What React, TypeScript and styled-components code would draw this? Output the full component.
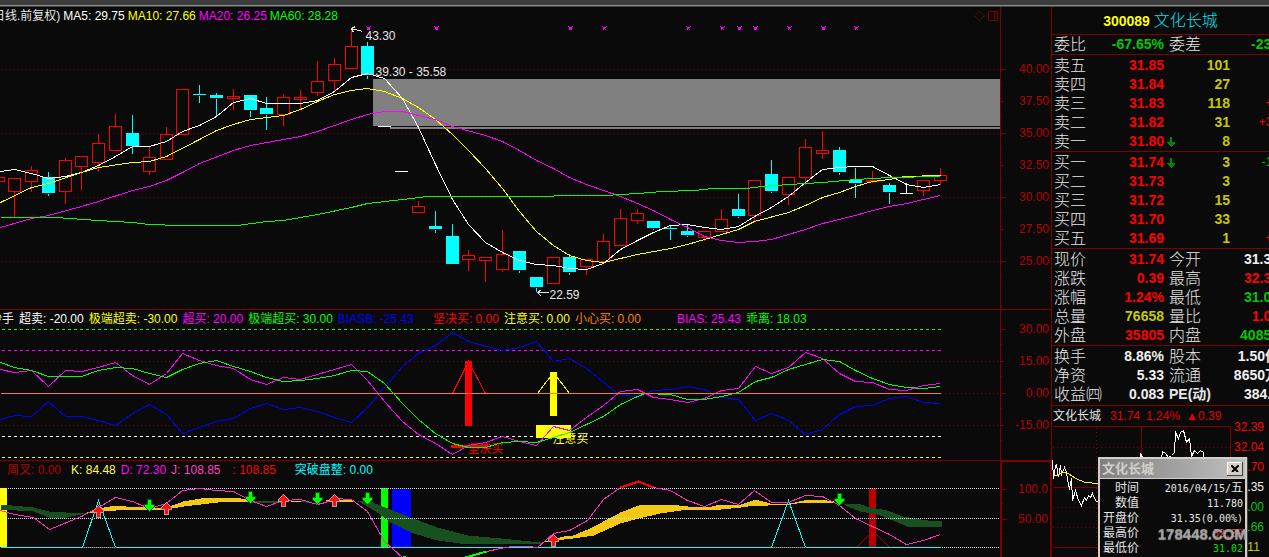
import React from "react";
import styled, { createGlobalStyle } from "styled-components";

const ink = "#0a0a0a";
const line = "#800000";
const sans = `"Liberation Sans", "Noto Sans CJK SC", sans-serif`;

const GlobalStyle = createGlobalStyle`
  * { box-sizing: border-box; }
  body { margin: 0; background: ${ink}; font: 12px/16px ${sans}; color: #e6e6e6; overflow: hidden; }
  button { padding: 0; border: 0; background: none; cursor: default; }
  table { border-collapse: collapse; border-spacing: 0; }
  th, td { padding: 0; font-weight: 400; white-space: nowrap; }
  svg { display: block; }
`;

const Page = styled.div`
  display: flex;
  flex-direction: column;
  height: 100vh;
`;

const TopBar = styled.div`
  flex: none;
  height: 7px;
  background: #3c3c3c;
  border-bottom: 1px solid #444;
  box-shadow: inset 0 -1px 0 #8c8c8c;
`;

const Body = styled.div`
  flex: 1;
  min-height: 0;
  display: flex;
`;

const Charts = styled.main`
  flex: 1;
  min-width: 0;
  display: flex;
  flex-direction: column;
`;

const Panel = styled.section<{ $last?: boolean }>`
  flex: ${(p) => (p.$last ? "1" : "none")};
  display: flex;
  min-height: 0;
  border-bottom: ${(p) => (p.$last ? "0" : `1px solid ${line}`)};
`;

const PlotColumn = styled.div`
  flex: 1;
  min-width: 0;
  display: flex;
  flex-direction: column;
`;

const Legend = styled.header<{ $gap: number; $start: number }>`
  flex: none;
  display: flex;
  gap: ${(p) => p.$gap}px;
  height: 17px;
  padding-top: 1px;
  margin-left: ${(p) => p.$start}px;
  overflow: hidden;
  white-space: nowrap;
`;

const LegendItem = styled.span<{ $color: string; $before?: number }>`
  flex: none;
  color: ${(p) => p.$color};
  margin-left: ${(p) => p.$before ?? 0}px;
`;

const Tools = styled.div`
  display: flex;
  align-items: center;
  gap: 3px;
  margin-left: auto;
  padding-right: 2px;
`;

const Plot = styled.svg<{ $height?: number }>`
  flex: ${(p) => (p.$height ? "none" : "1")};
  width: 100%;
  min-height: 0;
  height: ${(p) => (p.$height ? `${p.$height}px` : "auto")};
  overflow: hidden;
  shape-rendering: crispEdges;
  fill: none;
  font: 12px ${sans};
`;

const Axis = styled.div<{ $top: number; $heavy?: boolean }>`
  flex: none;
  width: 51px;
  padding-top: ${(p) => p.$top}px;
  border: solid ${line};
  border-width: ${(p) => (p.$heavy ? "1px 1px 0 2px" : "0 0 0 1px")};
  color: #b80000;
`;

const AxisLabel = styled.div<{ $height: number; $tick: number }>`
  display: flex;
  align-items: center;
  justify-content: space-between;
  height: ${(p) => p.$height}px;
  padding-right: 2px;
  background: linear-gradient(${line}, ${line}) left bottom / 1px 1px no-repeat;
  &::before {
    content: "";
    width: ${(p) => p.$tick}px;
    height: 1px;
    background: ${line};
  }
`;

const Sidebar = styled.aside`
  position: relative;
  flex: none;
  width: 218px;
  border-left: 1px solid ${line};
  overflow: hidden;
`;

const StockTitle = styled.h1`
  display: flex;
  justify-content: center;
  align-items: center;
  gap: 4px;
  height: 28px;
  margin: 0;
  border-bottom: 1px solid ${line};
  font-size: 16px;
  font-weight: 300;
  color: #00e0f0;
`;

const Code = styled.b`
  font-size: 14px;
  font-weight: 700;
  color: #ffff00;
`;

const Block = styled.div<{ $top?: number; $bottom?: number }>`
  padding-top: ${(p) => p.$top ?? 1}px;
  padding-bottom: ${(p) => p.$bottom ?? 0}px;
  border-bottom: 1px solid ${line};
`;

const Quotes = styled.table`
  table-layout: fixed;
  width: 227px;
  line-height: 19px;
`;

const Row = styled.tr`
  height: 19px;
`;

const Name = styled.th<{ $w: number; $pad?: number; $bold?: boolean }>`
  width: ${(p) => p.$w}px;
  height: 19px;
  padding-left: ${(p) => p.$pad ?? 2}px;
  text-align: left;
  font-size: ${(p) => (p.$bold ? 14 : 16)}px;
  font-weight: ${(p) => (p.$bold ? 700 : 300)};
  color: #e6e6e6;
`;

const Value = styled.td<{ $w: number; $color: string; $small?: boolean }>`
  width: ${(p) => p.$w}px;
  text-align: right;
  font-size: ${(p) => (p.$small ? 12 : 14)}px;
  font-weight: ${(p) => (p.$small ? 400 : 700)};
  color: ${(p) => p.$color};
`;

const ArrowCell = styled.td`
  width: 16px;
  padding-left: 3px;
`;

const Ticker = styled.div`
  display: flex;
  align-items: center;
  gap: 6px;
  height: 20px;
  padding-left: 1px;
  color: #e00000;
`;

const TickerName = styled.span`
  margin-right: 3px;
  color: #e6e6e6;
`;

const Mini = styled.div`
  display: flex;
`;

const MiniPlot = styled.svg`
  flex: none;
  width: 180px;
  height: 131px;
  shape-rendering: crispEdges;
  fill: none;
`;

const MiniScale = styled.div`
  margin-top: -9px;
  padding-left: 2px;
  line-height: 20px;
`;

const Scale = styled.div<{ $color: string }>`
  color: ${(p) => p.$color};
`;

const Popup = styled.section`
  position: absolute;
  right: 22px;
  bottom: 0;
  width: 149px;
  padding: 1px;
  border: solid #d4d0c8;
  border-width: 2px 2px 0;
  background: ${ink};
  box-shadow: 1px 0 0 #404040;
`;

const PopupTitle = styled.h2`
  display: flex;
  align-items: center;
  justify-content: space-between;
  height: 20px;
  margin: -1px -1px 2px;
  padding: 0 2px;
  border-bottom: 1px solid #d4d0c8;
  background: linear-gradient(90deg, #808080, #c0c0c0);
  color: #d4d0c8;
  font-size: 13px;
  font-weight: 700;
`;

const CloseButton = styled.button`
  && {
    display: grid;
    place-items: center;
    width: 16px;
    height: 14px;
    background: #d4d0c8;
    box-shadow: inset -1px -1px 0 #404040, inset 1px 1px 0 #fff;
  }
`;

const Facts = styled.table`
  width: 100%;
  line-height: 15px;
`;

const FactName = styled.th`
  width: 38px;
  height: 15px;
  text-align: right;
  font-size: 12px;
  color: #e6e6e6;
`;

const FactValue = styled.td<{ $color: string }>`
  padding-right: 1px;
  text-align: right;
  font: 10px/15px "DejaVu Sans Mono", "Noto Sans CJK SC", monospace;
  color: ${(p) => p.$color};
`;

const FactDay = styled.span`
  font-size: 12px;
`;

const Watermark = styled.div`
  position: absolute;
  right: 22px;
  bottom: 13px;
  font: 700 15px/20px "Liberation Sans", sans-serif;
  color: rgba(170, 170, 170, 0.85);
  text-shadow: 0 1px 1px #999;
`;

/* Candle: centre, high, low, body top, body bottom, kind */
type Candle = [number, number, number, number, number, "r" | "c" | "w"];

const candles: Candle[] = [
  [-2, 177, 181, 177, 181, "r"], [14, 178, 216, 178, 191, "r"], [31, 165, 191, 170, 181, "r"],
  [48, 171, 195, 177, 193, "c"], [65, 157, 203, 160, 191, "r"], [81, 156, 189, 156, 166, "r"],
  [98, 133, 171, 143, 162, "r"], [115, 113, 150, 126, 150, "r"], [132, 114, 153, 133, 146, "c"],
  [149, 146, 174, 157, 171, "r"], [166, 126, 159, 134, 159, "r"], [182, 89, 134, 89, 134, "r"],
  [199, 84, 102, 94, 95, "c"], [216, 92, 115, 95, 98, "c"], [233, 88, 109, 96, 98, "r"],
  [250, 94, 116, 95, 110, "c"], [266, 96, 129, 108, 114, "c"], [283, 93, 125, 97, 114, "r"],
  [300, 89, 109, 97, 99, "r"], [317, 60, 95, 81, 92, "r"], [334, 57, 91, 64, 80, "r"],
  [351, 29, 68, 46, 68, "r"], [367, 41, 78, 46, 75, "c"], [384, 126, 126, 126, 127, "w"],
  [401, 171, 171, 171, 172, "w"], [418, 200, 212, 206, 212, "r"], [435, 210, 232, 226, 229, "c"],
  [452, 223, 264, 236, 264, "c"], [468, 249, 270, 255, 259, "r"], [485, 257, 281, 257, 260, "r"],
  [502, 229, 271, 254, 269, "r"], [519, 251, 272, 251, 270, "c"], [536, 276, 291, 277, 287, "c"],
  [553, 257, 283, 257, 283, "r"], [569, 253, 274, 257, 272, "c"], [586, 258, 274, 259, 266, "r"],
  [603, 233, 261, 241, 261, "r"], [620, 208, 245, 218, 245, "r"], [637, 208, 223, 213, 220, "r"],
  [653, 221, 229, 221, 228, "c"], [670, 225, 239, 228, 229, "c"], [687, 223, 236, 231, 235, "c"],
  [704, 231, 240, 231, 237, "r"], [721, 208, 231, 219, 231, "r"], [738, 193, 217, 209, 216, "c"],
  [754, 180, 221, 180, 215, "r"], [771, 159, 192, 174, 191, "c"], [788, 177, 204, 177, 194, "r"],
  [805, 138, 184, 147, 177, "r"], [822, 130, 158, 150, 153, "r"], [839, 146, 174, 150, 172, "c"],
  [855, 167, 197, 180, 183, "c"], [872, 170, 182, 180, 181, "r"], [889, 182, 203, 185, 192, "c"],
  [906, 182, 193, 193, 194, "w"], [923, 180, 195, 180, 190, "r"], [940, 167, 184, 175, 180, "r"],
];

const ma5 = "0,171 14,169 31,173 48,178 65,176 81,172 98,165 115,156 132,146 149,146 166,141 182,131 199,125 216,116 233,102 250,98 266,103 300,103 317,100 334,91 351,77 367,73 384,78 402,98 418,127 435,164 452,199 468,224 485,242 502,252 519,260 536,264 553,265 569,268 586,269 603,263 620,249 637,240 653,232 670,225 687,224 704,227 721,229 738,226 754,216 771,207 788,196 805,182 822,169 839,167 855,166 872,166 889,175 906,184 923,187 940,184";
const ma10 = "0,202 31,187 48,183 81,172 98,167 132,162 149,161 166,156 199,139 216,130 233,124 250,119 283,115 300,109 317,101 334,94 351,90 367,88 384,91 402,98 418,107 435,119 452,134 468,150 485,168 502,188 519,211 536,231 553,245 569,255 586,260 603,262 620,258 637,254 670,248 687,244 721,234 738,229 754,221 788,212 805,205 822,197 839,192 855,186 872,181 889,179 904,176 940,175";
const ma20 = "0,227 31,218 48,215 81,206 98,201 132,190 149,186 166,180 182,172 199,163 233,150 250,145 283,139 300,136 317,131 351,119 367,114 384,111 402,111 418,115 435,119 452,126 485,135 502,141 519,150 536,160 553,168 569,177 586,184 603,190 620,196 637,203 653,210 670,219 687,227 704,236 721,240 738,242 754,241 771,239 788,234 805,229 822,223 855,215 872,210 889,206 906,203 940,195";
const ma60 = "0,217 55,217 98,220 132,222 149,224 180,225 237,225 266,221 283,220 300,217 317,214 351,207 367,203 402,199 427,196 545,196 562,195 604,195 637,193 662,191 694,190 712,188 745,188 762,186 788,184 822,182 855,179 889,177 940,176";

const biasB = "0,419 14,415 31,416 48,401 65,416 81,416 98,420 115,425 132,413 149,404 166,414 182,433 199,427 216,421 233,418 250,408 266,403 283,409 300,407 317,411 334,417 351,422 367,407 384,387 402,366 418,353 435,345 452,332 468,341 502,350 519,347 536,341 553,361 569,358 586,368 617,393 637,397 645,393 653,390 670,389 687,386 704,389 721,397 738,399 755,420 771,413 788,420 805,434 822,429 839,414 855,406 872,405 889,398 906,396 923,402 940,403";
const bias = "0,369 14,372 31,370 48,386 65,370 81,371 98,367 115,362 132,375 149,384 166,373 182,353 199,360 216,365 233,368 250,379 266,384 283,377 300,379 317,374 334,369 351,364 367,380 384,401 402,421 418,434 435,443 452,454 468,445 485,442 502,436 519,441 536,445 553,426 569,430 586,417 603,405 620,391 637,389 653,397 670,399 687,402 704,398 721,390 738,388 755,366 771,373 788,367 805,352 822,358 839,373 855,381 872,382 889,389 906,390 923,385 940,383";
const guaili = "0,362 14,367 31,370 48,376 81,376 98,370 115,367 132,368 149,373 166,377 182,369 199,363 216,360 233,366 250,371 266,377 283,381 300,380 317,378 334,375 351,370 367,371 384,383 402,403 418,419 435,433 452,443 468,447 485,447 502,442 519,441 536,442 553,437 569,432 586,424 603,416 620,404 637,396 645,393 670,394 687,399 704,399 721,396 738,392 755,381 771,377 788,369 805,364 822,359 839,361 855,370 872,378 889,384 906,387 923,388 940,386";

const jLeft = "0,510 14,514 33,517 49,529 81,516 98,507 115,497 132,501 149,508 166,503 182,490 199,488 216,490 233,491 250,500 266,506 283,500 300,499 317,504 325,502 334,498 351,499 367,511 384,541 402,557";
const jRight = "486,551 500,548 512,546 528,546 537,547 553,533 569,530 587,520 603,499 620,487 638,481 653,487 670,490 687,500 704,506 721,499 738,504 754,490 771,502 788,502 805,495 822,496 839,505 855,518 872,526 889,534 906,544 923,540 940,534";
const darkBands = [
  "0,504 33,507 48,511 65,512 86,512 86,513 65,517 48,517 33,511 0,509",
  "250,500 283,501 283,502 250,502",
  "300,500 317,503 317,504 300,501",
  "355,500 370,501 382,506 410,517 437,527 467,535 500,538 540,542 540,544 500,543 460,543 437,540 410,532 390,522 377,512 360,502",
  "843,503 860,504 870,507 887,510 903,516 913,518 927,520 941,521 941,527 907,526 890,519 877,514 860,511 847,506",
];
const goldBands = [
  "86,512 98,508 115,505 125,506 149,507 166,507 183,501 200,498 217,497 233,497 248,499 248,501 233,501 217,502 200,504 183,506 166,509 149,509 125,509 115,510 98,511 86,513",
  "290,500 300,500 300,501 290,501",
  "325,500 334,499 353,499 353,501 325,502",
  "543,541 563,536 573,535 587,529 603,521 620,512 638,505 670,504 687,506 707,507 720,504 738,505 755,499 770,503 790,503 803,500 820,499 833,501 833,503 823,502 803,502 790,504 767,505 755,505 740,507 720,509 700,509 680,510 660,513 638,518 620,523 593,535 573,538 553,540 543,542",
];

const marks: [number, boolean][] = [
  [368, true], [436, true], [570, true], [604, false], [688, false], [722, false],
  [739, true], [755, true], [789, false], [823, true], [856, false],
];

/* Strokes sit on half-pixel centres inside a plot; solid blocks go back to whole pixels. */
const Solid = (props: React.SVGProps<SVGRectElement>) => (
  <rect transform="translate(-0.5 -0.5)" {...props} />
);

const Dots = ({ y, from = 0 }: { y: number; from?: number }) => (
  <line x1={from} x2="100%" y1={y} y2={y} stroke={line} strokeDasharray="1 3" />
);

const Curve = ({ points, color }: { points: string; color: string }) => (
  <polyline points={points} stroke={color} />
);

const colors = { r: "#ff0000", c: "#00ffff", w: "#ffffff" };

const CandleShape = ({ data: [x, hi, lo, top, bottom, kind] }: { data: Candle }) => {
  const c = colors[kind];
  return (
    <g>
      {hi < top && <line x1={x} x2={x} y1={hi} y2={top} stroke={c} />}
      {lo > bottom && <line x1={x} x2={x} y1={bottom} y2={lo} stroke={c} />}
      {kind === "r" ? (
        <rect x={x - 6} y={top} width={12} height={bottom - top} stroke={c} />
      ) : (
        <Solid x={x - 6} y={top} width={13} height={bottom - top} fill={c} />
      )}
    </g>
  );
};

const Up = ({ x, y }: { x: number; y: number }) => (
  <path transform={`translate(${x} ${y})`} d="M0-6 5-1V1H2V6H-2V1H-5V-1Z" fill="#ff1010" stroke="#b0a0a0" />
);
const Down = ({ x, y }: { x: number; y: number }) => (
  <path transform={`translate(${x} ${y})`} d="M0 6 5 1V-1H2V-6H-2V-1H-5V1Z" fill="#00ff00" stroke="#006000" />
);

const SmallDown = () => (
  <svg width="8" height="10" viewBox="0 0 8 10" shapeRendering="crispEdges">
    <path d="M3 0H5V5H8V6L4 10 0 6V5H3Z" fill="#008800" />
  </svg>
);

const red = "#ff0000";
const green = "#00c800";
const olive = "#c8c800";
const white = "#f0f0f0";

type Quote = [string, string, boolean, string, string, string];
const asks: Quote[] = [
  ["卖五", "31.85", false, "101", "", red],
  ["卖四", "31.84", false, "27", "", red],
  ["卖三", "31.83", false, "118", "+1", red],
  ["卖二", "31.82", false, "31", "+31", red],
  ["卖一", "31.80", true, "8", "", red],
];
const bids: Quote[] = [
  ["买一", "31.74", true, "3", "-12", green],
  ["买二", "31.73", false, "3", "", red],
  ["买三", "31.72", false, "15", "", red],
  ["买四", "31.70", false, "33", "", red],
  ["买五", "31.69", false, "1", "+1", red],
];

type Stat = [string, string, string, string, string, string];
const ratio: Stat[] = [["委比", "-67.65%", green, "委差", "-231", green]];
const stats: Stat[] = [
  ["现价", "31.74", red, "今开", "31.35", white],
  ["涨跌", "0.39", red, "最高", "32.39", red],
  ["涨幅", "1.24%", red, "最低", "31.02", green],
  ["总量", "76658", olive, "量比", "1.04", red],
  ["外盘", "35805", red, "内盘", "40853", green],
];
const capital: Stat[] = [
  ["换手", "8.86%", white, "股本", "1.50亿", white],
  ["净资", "5.33", white, "流通", "8650万", white],
  ["收益㈣", "0.083", white, "PE(动)", "384.5", white],
];

const Book = ({ rows }: { rows: Quote[] }) => (
  <Quotes>
    <tbody>
      {rows.map(([name, price, arrow, qty, delta, color]) => (
        <Row key={name}>
          <Name $w={40} scope="row">{name}</Name>
          <Value $w={72} $color={red}>{price}</Value>
          <ArrowCell>{arrow && <SmallDown />}</ArrowCell>
          <Value $w={50} $color={olive}>{qty}</Value>
          <Value $w={49} $color={color} $small>{delta}</Value>
        </Row>
      ))}
    </tbody>
  </Quotes>
);

const Stats = ({ rows }: { rows: Stat[] }) => (
  <Quotes>
    <tbody>
      {rows.map(([a, av, ac, b, bv, bc]) => (
        <Row key={a}>
          <Name $w={52} scope="row">{a}</Name>
          <Value $w={60} $color={ac}>{av}</Value>
          <Name $w={55} $pad={5} $bold={b.startsWith("PE")} scope="row">{b}</Name>
          <Value $w={60} $color={bc}>{bv}</Value>
        </Row>
      ))}
    </tbody>
  </Quotes>
);

const AxisScale = ({ labels, top, step, heavy }: { labels: string[]; top: number; step: number; heavy?: boolean }) => (
  <Axis $top={top} $heavy={heavy}>
    {labels.map((label, i) => (
      <AxisLabel key={label} $height={step} $tick={i % 2 && !heavy ? 3 : 5}>{label}</AxisLabel>
    ))}
  </Axis>
);

const PricePanel = () => (
  <Panel aria-label="日线">
    <PlotColumn>
      <Legend $gap={3} $start={-7}>
        <LegendItem $color="#e6e6e6">日线.前复权)</LegendItem>
        <LegendItem $color="#ffffff">MA5: 29.75</LegendItem>
        <LegendItem $color="#ffff00">MA10: 27.66</LegendItem>
        <LegendItem $color="#ff00ff">MA20: 26.25</LegendItem>
        <LegendItem $color="#00ff00">MA60: 28.28</LegendItem>
        <Tools>
          <button aria-label="标记">
            <svg width="11" height="12" viewBox="0 0 11 12" fill="none" stroke={line}>
              <path d="M5.500 1 10 6 5.500 11 1 6Z" strokeDasharray="2 1" />
            </svg>
          </button>
          <button aria-label="侧栏">
            <svg width="10" height="10" viewBox="0 0 10 10" fill="none" stroke={line}>
              <path d="M.5.5H9.500V9.500H.5ZM6.500 0V10" />
            </svg>
          </button>
        </Tools>
      </Legend>
      <Plot $height={285}>
        <g transform="translate(0.5 -23.5)">
          {[69, 133, 197, 261].map((y) => <Dots key={y} y={y} />)}
          <Solid x="373" y="79" width="100%" height="47" fill="#808080" />
          <Solid x="390" y="127" width="100%" height="2" fill="#808080" />
          {candles.map((c) => <CandleShape key={c[0]} data={c} />)}
          <Curve points={ma5} color="#ffffff" />
          <Curve points={ma10} color="#ffff00" />
          <Curve points={ma20} color="#ff00ff" />
          <Curve points={ma60} color="#00ff00" />
          <path d="M904 176H915M932 175H940" stroke="#ffff00" />
          {marks.map(([x, big]) => (
            <g key={x} fill="#ff00ff">
              <path d={`M${x - 2} 26L${x + 2} 30M${x + 2} 26L${x - 2} 30`} stroke="#ff00ff" />
              <Solid x={x - 1} y="27" width={big ? 3 : 2} height={big ? 3 : 2} />
            </g>
          ))}
          <path d="M362 31 351 28M355 26 351 28 353 32M548 292H537M541 289 537 292 541 296" stroke="#e6e6e6" />
          <g fill="#e6e6e6">
            <text x="365" y="39">43.30</text>
            <text x="375" y="75">39.30 - 35.58</text>
            <text x="549" y="298">22.59</text>
          </g>
        </g>
      </Plot>
    </PlotColumn>
    <AxisScale top={46} step={32} labels={["40.00", "37.50", "35.00", "32.50", "30.00", "27.50", "25.00"]} />
  </Panel>
);

const BiasPanel = () => (
  <Panel aria-label="乖离">
    <PlotColumn>
      <Legend $gap={5} $start={-10}>
        <LegendItem $color="#e6e6e6">抄手</LegendItem>
        <LegendItem $color="#ffffff">超卖: -20.00</LegendItem>
        <LegendItem $color="#ffff00">极端超卖: -30.00</LegendItem>
        <LegendItem $color="#ff00ff">超买: 20.00</LegendItem>
        <LegendItem $color="#00ff00">极端超买: 30.00</LegendItem>
        <LegendItem $color="#0000ff">BIASB: -25.43</LegendItem>
        <LegendItem $color="#ff0000" $before={14}>坚决买: 0.00</LegendItem>
        <LegendItem $color="#ffff00">注意买: 0.00</LegendItem>
        <LegendItem $color="#ff8000">小心买: 0.00</LegendItem>
        <LegendItem $color="#ff00ff" $before={31}>BIAS: 25.43</LegendItem>
        <LegendItem $color="#00ff00">乖离: 18.03</LegendItem>
      </Legend>
      <Plot $height={133}>
        <g transform="translate(0.5 -326.5)">
          <Dots y={361} />
          <Dots y={425} />
          <Dots y={393} from={940} />
          <g strokeDasharray="3 3">
            <path d="M1 329H940" stroke="#00ff00" />
            <path d="M1 350H940" stroke="#ff00ff" />
            <path d="M1 436H940" stroke="#ffffff" />
            <path d="M1 457H940" stroke="#ffff00" />
          </g>
          <Curve points={biasB} color="#0000ff" />
          <path d="M452 393 468 361 485 393" stroke="#ff0000" />
          <path d="M537 393 553 372 569 393" stroke="#ffff00" />
          <Solid x="465" y="361" width="7" height="65" fill="#ff0000" />
          <Solid x="550" y="372" width="7" height="44" fill="#ffff00" />
          <Solid x="451" y="445" width="37" height="3" fill="#ff0000" />
          <Solid x="536" y="425" width="35" height="13" fill="#ffff00" />
          <text x="467" y="452" fill="#ff0000">坚决买</text>
          <text x="552" y="442" fill="#ffff00">注意买</text>
          <Curve points={bias} color="#ff00ff" />
          <Curve points={guaili} color="#00ff00" />
          <path d="M0 393H940" stroke="#ff8000" />
        </g>
      </Plot>
    </PlotColumn>
    <AxisScale top={3} step={32} labels={["30.00", "15.00", "0.00", "-15.00"]} />
  </Panel>
);

const KdjPanel = () => (
  <Panel $last aria-label="KDJ">
    <PlotColumn>
      <Legend $gap={5} $start={7}>
        <LegendItem $color="#b80000">周叉: 0.00</LegendItem>
        <LegendItem $color="#ffff40" $before={5}>K: 84.48</LegendItem>
        <LegendItem $color="#ff00ff">D: 72.30</LegendItem>
        <LegendItem $color="#ff40c0">J: 108.85</LegendItem>
        <LegendItem $color="#ff0000" $before={7}>: 108.85</LegendItem>
        <LegendItem $color="#00ffff" $before={14}>突破盘整: 0.00</LegendItem>
      </Legend>
      <Plot>
        <g transform="translate(0.5 -477.5)">
          <Solid x="0" y="488" width="7" height="59" fill="#ffff00" />
          <Solid x="381" y="488" width="7" height="59" fill="#00ff00" />
          <Solid x="392" y="488" width="19" height="59" fill="#0000ff" />
          <Solid x="869" y="488" width="7" height="59" fill="#b80000" />
          {darkBands.map((p) => <polygon key={p} points={p} fill="#18501f" />)}
          {goldBands.map((p) => <polygon key={p} points={p} fill="#f5c816" />)}
          <g stroke="#e6e6e6" strokeDasharray="1 1">
            <line x1="1" x2="100%" y1="488" y2="488" />
            <line x1="1" x2="100%" y1="518" y2="518" />
            <line x1="1" x2="100%" y1="547" y2="547" />
          </g>
          <path d="M0 547H940M82 547 98 500 115 547M771 547 788 500 805 547" stroke="#00ffff" />
          <path d="M82 547H115M772 547H805" stroke="#ff0000" strokeDasharray="1 1" />
          <path d="M856 547 869 534M876 534 889 547" stroke="#b80000" />
          <Curve points={jLeft} color="#ff30c0" />
          <Curve points={jRight} color="#ff30c0" />
          <path d="M620 487 638 481 653 487" stroke="#ff0000" strokeWidth="2" />
          <path d="M402 556H405M465 557 486 551" stroke="#00ff00" strokeWidth="2" />
          <Up x={98} y={511} /><Up x={166} y={508} /><Up x={283} y={500} /><Up x={334} y={500} /><Up x={553} y={540} />
          <Down x={149} y={505} /><Down x={250} y={497} /><Down x={317} y={498} /><Down x={367} y={498} /><Down x={839} y={499} />
        </g>
      </Plot>
    </PlotColumn>
    <AxisScale top={12} step={30} heavy labels={["100.0", "50.00"]} />
  </Panel>
);

const IntradayChart = () => (
  <Mini>
    <MiniPlot role="img" aria-label="分时">
      <g transform="translate(-1051.5 -425.5)">
        <path d="M1052 447H1230M1052 467H1230M1052 507H1230M1052 527H1230M1096 427V557M1186 427V557" stroke={line} strokeDasharray="1 3" />
        <path d="M1052 426H1230V557M1141 426V557M1052 487H1230M1052 547H1230" stroke={line} />
        <polyline stroke="#ffffff" points="1052,460 1053,478 1055,465 1056,464 1058,476 1060,465 1061,474 1064,467 1066,472 1068,485 1069,488 1071,478 1072,500 1075,490 1078,500 1081,505 1084,497 1086,500 1088,495 1090,497 1092,493 1095,500 1098,502" />
        <polyline stroke="#ffffff" points="1140,459 1140,453 1142,457 1144,457 1146,460" />
        <polyline stroke="#ffffff" points="1161,459 1162,451 1165,453 1168,457 1171,455 1174,452 1175,432 1178,438 1180,432 1183,430 1186,442 1189,438 1191,456 1194,450 1197,453 1200,450 1203,452 1203,459" />
        <polyline stroke="#ffff00" points="1052,475 1056,475 1062,472 1068,473 1075,478 1085,482 1098,483" />
      </g>
    </MiniPlot>
    <MiniScale>
      <Scale $color={red}>32.39</Scale>
      <Scale $color={red}>32.04</Scale>
      <Scale $color={red}>31.70</Scale>
      <Scale $color={white}>31.35</Scale>
      <Scale $color={green}>31.00</Scale>
      <Scale $color={green}>30.66</Scale>
      <Scale $color={olive}>1211</Scale>
    </MiniScale>
  </Mini>
);

const DataPopup = () => (
  <Popup aria-label="文化长城">
    <PopupTitle>
      文化长城
      <CloseButton aria-label="关闭">
        <svg width="8" height="7" viewBox="0 0 8 7">
          <path d="M0 0 7 7M8 0 1 7" stroke="#000" strokeWidth="2" />
        </svg>
      </CloseButton>
    </PopupTitle>
    <Facts>
      <tbody>
        <tr><FactName scope="row">时间</FactName><FactValue $color="#e6e6e6">2016/04/15/<FactDay>五</FactDay></FactValue></tr>
        <tr><FactName scope="row">数值</FactName><FactValue $color="#e6e6e6">11.780</FactValue></tr>
        <tr><FactName scope="row">开盘价</FactName><FactValue $color="#e6e6e6">31.35(0.00%)</FactValue></tr>
        <tr><FactName scope="row">最高价</FactName><FactValue $color="#ff3030">32.39</FactValue></tr>
        <tr><FactName scope="row">最低价</FactName><FactValue $color="#00e000">31.02</FactValue></tr>
      </tbody>
    </Facts>
  </Popup>
);

export default function App() {
  return (
    <Page>
      <GlobalStyle />
      <TopBar />
      <Body>
        <Charts>
          <PricePanel />
          <BiasPanel />
          <KdjPanel />
        </Charts>
        <Sidebar>
          <StockTitle><Code>300089</Code>文化长城</StockTitle>
          <Block $top={0}><Stats rows={ratio} /></Block>
          <Block><Book rows={asks} /></Block>
          <Block><Book rows={bids} /></Block>
          <Block><Stats rows={stats} /></Block>
          <Block $bottom={1}><Stats rows={capital} /></Block>
          <Ticker>
            <TickerName>文化长城</TickerName>
            <span>31.74</span>
            <span>1.24%</span>
            <span>▲0.39</span>
          </Ticker>
          <IntradayChart />
          <DataPopup />
          <Watermark>178448.COM</Watermark>
        </Sidebar>
      </Body>
    </Page>
  );
}
